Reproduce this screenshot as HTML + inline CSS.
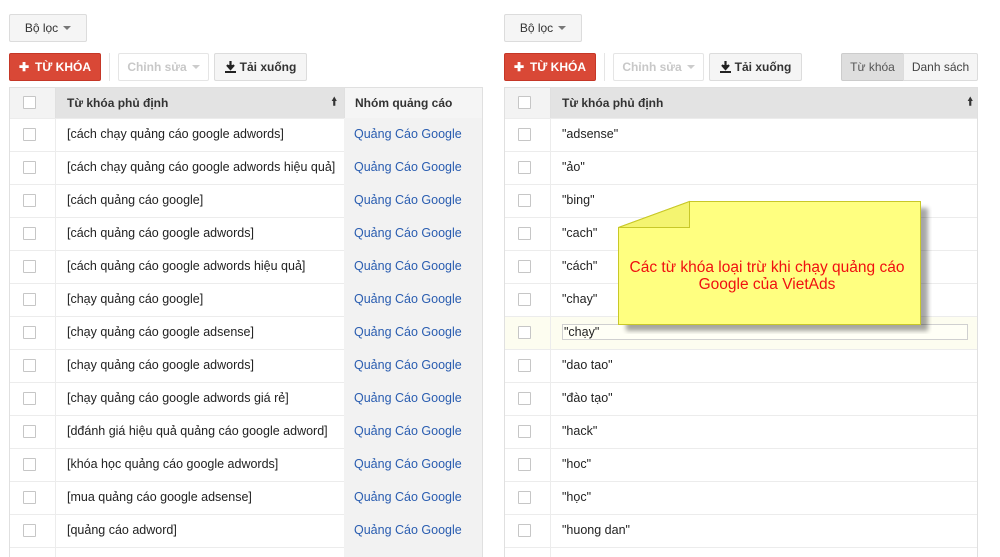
<!DOCTYPE html>
<html><head><meta charset="utf-8"><style>
*{box-sizing:border-box;margin:0;padding:0}
body{width:1000px;height:550px;overflow:hidden;background:#fff;font-family:"Liberation Sans",Arial,sans-serif;font-size:12.5px;color:#222;position:relative;white-space:nowrap}
.a{position:absolute}
.btn{position:absolute;height:28px;border:1px solid #dcdcdc;border-radius:2px;background:#f5f5f5;font-size:12px;font-weight:bold;color:#333;display:flex;align-items:center;justify-content:center}
.red{background:#d94836;border-color:#c53727;color:#fff}
.dis{background:#fff;border-color:#e5e5e5;color:#c8c8c8}
.caret{display:inline-block;width:0;height:0;border-left:4px solid transparent;border-right:4px solid transparent;border-top:4px solid #777;margin-left:5px;vertical-align:middle}
.tbl{position:absolute;top:87px;border:1px solid #e0e0e0;border-bottom:none;height:470px;overflow:hidden}
.hdr{height:30px;background:#e3e3e3;display:flex;font-weight:bold;font-size:12px;color:#333}
.hdr>div{padding-bottom:1px}
.row{height:33px;display:flex}
.row>div{padding-bottom:2px;border-top:1px solid #ececec}
.row>.c3{border-top-color:#f2f2f2}
.c1{width:46px;flex:none;border-right:1px solid #ececec;display:flex;align-items:center;padding-left:13px}
.hdr .c1{background:#f3f3f3;border-right:1px solid #e0e0e0}
.cb{width:13px;height:13px;border:1px solid #c6c6c6;background:#fff;border-radius:1px}
.c2{padding-left:11px;display:flex;align-items:center;flex:none}
.r .c2{width:426px}
.c3{background:#f2f2f2;padding-left:10px;display:flex;align-items:center;color:#2a5db0}
.hdr .c3{background:#f5f5f5;color:#333;border-left:1px solid #e0e0e0}
.plus{font-size:12px;margin-right:6px}
</style></head><body>

<div class="btn" style="left:9px;top:14px;width:78px;font-weight:normal;color:#333">Bộ lọc<span class="caret"></span></div>
<div class="btn red" style="left:9px;top:53px;width:92px"><span class="plus">✚</span>TỪ KHÓA</div>
<div class="a" style="left:109px;top:53px;width:1px;height:28px;background:#e5e5e5"></div>
<div class="btn dis" style="left:118px;top:53px;width:91px">Chỉnh sửa<span class="caret" style="border-top-color:#ccc"></span></div>
<div class="btn" style="left:214px;top:53px;width:93px"><svg width="11" height="12" style="margin-right:4px"><path d="M5.5 0v7M2 4l3.5 4 3.5-4" stroke="#222" stroke-width="2.2" fill="#222"/><rect x="0" y="10" width="11" height="2" fill="#222"/></svg>Tải xuống</div>

<div class="btn" style="left:504px;top:14px;width:78px;font-weight:normal;color:#333">Bộ lọc<span class="caret"></span></div>
<div class="btn red" style="left:504px;top:53px;width:92px"><span class="plus">✚</span>TỪ KHÓA</div>
<div class="a" style="left:604px;top:53px;width:1px;height:28px;background:#e5e5e5"></div>
<div class="btn dis" style="left:613px;top:53px;width:91px">Chỉnh sửa<span class="caret" style="border-top-color:#ccc"></span></div>
<div class="btn" style="left:709px;top:53px;width:93px"><svg width="11" height="12" style="margin-right:4px"><path d="M5.5 0v7M2 4l3.5 4 3.5-4" stroke="#222" stroke-width="2.2" fill="#222"/><rect x="0" y="10" width="11" height="2" fill="#222"/></svg>Tải xuống</div>
<div class="btn" style="left:841px;top:53px;width:63px;background:#dedede;border-color:#ccc;font-weight:normal;color:#555;border-radius:2px 0 0 2px">Từ khóa</div>
<div class="btn" style="left:903px;top:53px;width:75px;font-weight:normal;color:#444;border-radius:0 2px 2px 0">Danh sách</div>

<div class="tbl" style="left:9px;width:474px">
<div class="hdr"><div class="c1"><div class="cb"></div></div><div class="c2" style="width:288px;justify-content:space-between;padding-right:7px">Từ khóa phủ định<span style="font-size:11px">🠙</span></div><div class="c3" style="width:139px">Nhóm quảng cáo</div></div>
<div class="row"><div class="c1"><div class="cb"></div></div><div class="c2" style="width:288px">[cách chạy quảng cáo google adwords]</div><div class="c3" style="width:139px">Quảng Cáo Google</div></div>
<div class="row"><div class="c1"><div class="cb"></div></div><div class="c2" style="width:288px">[cách chạy quảng cáo google adwords hiệu quả]</div><div class="c3" style="width:139px">Quảng Cáo Google</div></div>
<div class="row"><div class="c1"><div class="cb"></div></div><div class="c2" style="width:288px">[cách quảng cáo google]</div><div class="c3" style="width:139px">Quảng Cáo Google</div></div>
<div class="row"><div class="c1"><div class="cb"></div></div><div class="c2" style="width:288px">[cách quảng cáo google adwords]</div><div class="c3" style="width:139px">Quảng Cáo Google</div></div>
<div class="row"><div class="c1"><div class="cb"></div></div><div class="c2" style="width:288px">[cách quảng cáo google adwords hiệu quả]</div><div class="c3" style="width:139px">Quảng Cáo Google</div></div>
<div class="row"><div class="c1"><div class="cb"></div></div><div class="c2" style="width:288px">[chạy quảng cáo google]</div><div class="c3" style="width:139px">Quảng Cáo Google</div></div>
<div class="row"><div class="c1"><div class="cb"></div></div><div class="c2" style="width:288px">[chạy quảng cáo google adsense]</div><div class="c3" style="width:139px">Quảng Cáo Google</div></div>
<div class="row"><div class="c1"><div class="cb"></div></div><div class="c2" style="width:288px">[chạy quảng cáo google adwords]</div><div class="c3" style="width:139px">Quảng Cáo Google</div></div>
<div class="row"><div class="c1"><div class="cb"></div></div><div class="c2" style="width:288px">[chạy quảng cáo google adwords giá rẻ]</div><div class="c3" style="width:139px">Quảng Cáo Google</div></div>
<div class="row"><div class="c1"><div class="cb"></div></div><div class="c2" style="width:288px">[dđánh giá hiệu quả quảng cáo google adword]</div><div class="c3" style="width:139px">Quảng Cáo Google</div></div>
<div class="row"><div class="c1"><div class="cb"></div></div><div class="c2" style="width:288px">[khóa học quảng cáo google adwords]</div><div class="c3" style="width:139px">Quảng Cáo Google</div></div>
<div class="row"><div class="c1"><div class="cb"></div></div><div class="c2" style="width:288px">[mua quảng cáo google adsense]</div><div class="c3" style="width:139px">Quảng Cáo Google</div></div>
<div class="row"><div class="c1"><div class="cb"></div></div><div class="c2" style="width:288px">[quảng cáo adword]</div><div class="c3" style="width:139px">Quảng Cáo Google</div></div>
<div class="row"><div class="c1"></div><div class="c2" style="width:288px"></div><div class="c3" style="width:139px"></div></div>
</div>

<div class="tbl r" style="left:504px;width:474px">
<div class="hdr"><div class="c1"><div class="cb"></div></div><div class="c2" style="justify-content:space-between;padding-right:4px">Từ khóa phủ định<span style="font-size:11px">🠙</span></div></div>
<div class="row"><div class="c1"><div class="cb"></div></div><div class="c2">"adsense"</div></div>
<div class="row"><div class="c1"><div class="cb"></div></div><div class="c2">"ảo"</div></div>
<div class="row"><div class="c1"><div class="cb"></div></div><div class="c2">"bing"</div></div>
<div class="row"><div class="c1"><div class="cb"></div></div><div class="c2">"cach"</div></div>
<div class="row"><div class="c1"><div class="cb"></div></div><div class="c2">"cách"</div></div>
<div class="row"><div class="c1"><div class="cb"></div></div><div class="c2">"chay"</div></div>
<div class="row" style="background:#fdfdf0"><div class="c1"><div class="cb"></div></div><div class="c2"><div style="width:406px;height:16px;border:1px solid #d0d0d0;background:#fffff6;line-height:14px;padding-left:1px">"chạy"</div></div></div>
<div class="row"><div class="c1"><div class="cb"></div></div><div class="c2">"dao tao"</div></div>
<div class="row"><div class="c1"><div class="cb"></div></div><div class="c2">"đào tạo"</div></div>
<div class="row"><div class="c1"><div class="cb"></div></div><div class="c2">"hack"</div></div>
<div class="row"><div class="c1"><div class="cb"></div></div><div class="c2">"hoc"</div></div>
<div class="row"><div class="c1"><div class="cb"></div></div><div class="c2">"học"</div></div>
<div class="row"><div class="c1"><div class="cb"></div></div><div class="c2">"huong dan"</div></div>
<div class="row"><div class="c1"></div><div class="c2"></div></div>
</div>

<svg class="a" style="left:612px;top:196px" width="320" height="138">
<defs><filter id="s" x="-10%" y="-10%" width="130%" height="130%"><feGaussianBlur stdDeviation="2.5"/></filter></defs>
<path d="M10 34 L81 8 L312 8 L312 131 L10 131 Z" fill="#000" opacity="0.35" filter="url(#s)" transform="translate(4,4)"/>
<path d="M6.5 31.5 L77.5 5.5 L308.5 5.5 L308.5 128.5 L6.5 128.5 Z" fill="#ffff80" stroke="#c8c828"/>
<path d="M6.5 31.5 L77.5 5.5 L77.5 31.5 Z" fill="#f4f470" stroke="#c8c828"/>
<text x="155" y="76" text-anchor="middle" font-family="Liberation Sans, Arial, sans-serif" font-size="15.5" fill="#f01010">Các từ khóa loại trừ khi chạy quảng cáo</text>
<text x="155" y="93" text-anchor="middle" font-family="Liberation Sans, Arial, sans-serif" font-size="15.5" fill="#f01010">Google của VietAds</text>
</svg>
</body></html>
